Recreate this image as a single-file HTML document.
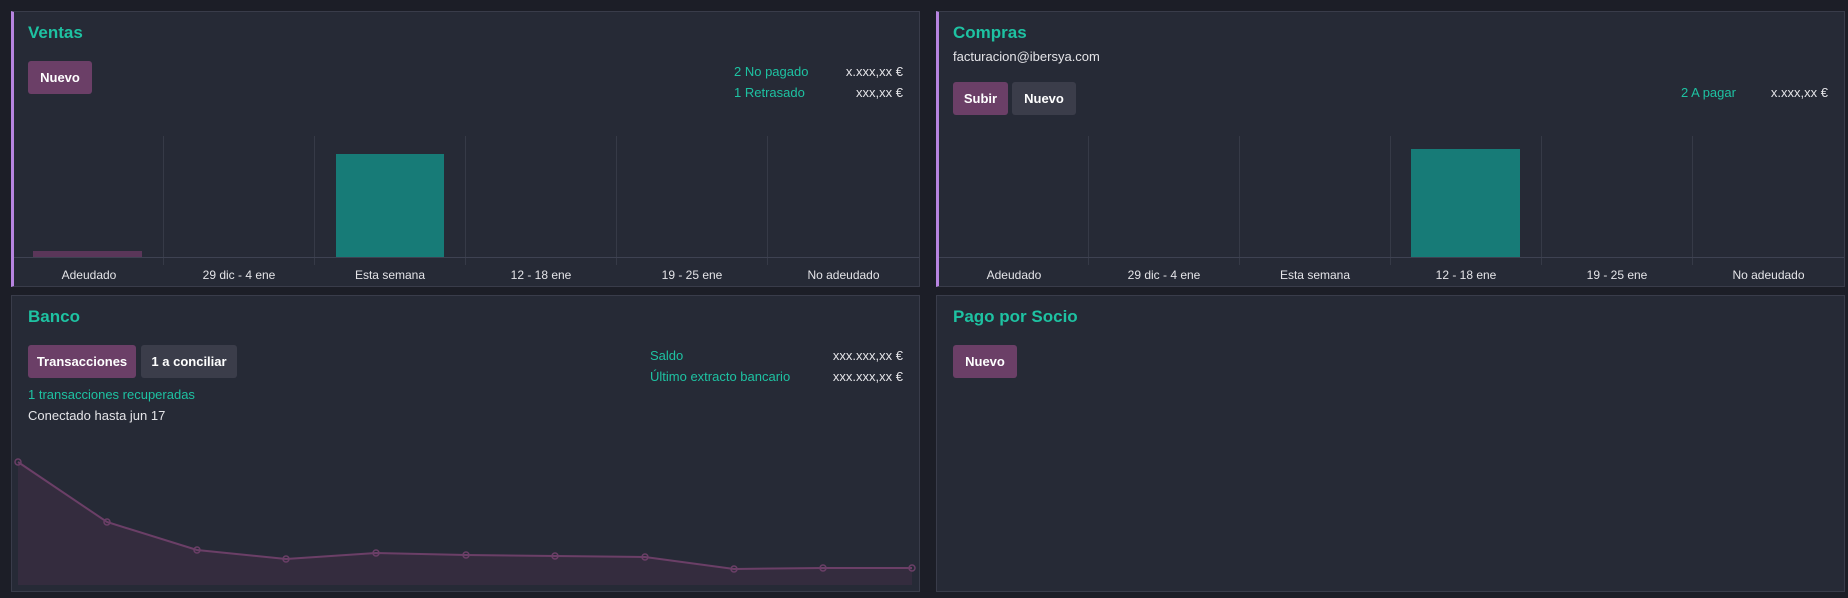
<!DOCTYPE html>
<html><head><meta charset="utf-8"><style>
*{margin:0;padding:0;box-sizing:border-box}
body{width:1848px;height:598px;background:#1c1e27;font-family:"Liberation Sans",sans-serif;position:relative;overflow:hidden;color:#e4e4e8}
.card{position:absolute;background:#262a36;border:1px solid #393c4a}
.lb{border-left:3px solid #b784e0}
.t{position:absolute;color:#1ec2a2;font-size:17px;font-weight:bold;line-height:20px}
.a{position:absolute;font-size:13px;line-height:16px;white-space:nowrap}
.g{color:#1ec2a2}
.btn{position:absolute;height:33px;border-radius:3px;font-size:13px;font-weight:bold;color:#fff;line-height:33px;text-align:center}
.p{background:#6b3f67}.s{background:#3b3d4a}
.vl{position:absolute;width:1px;background:#363a47}
.hl{position:absolute;height:1px;background:#3e4252}
.lab{position:absolute;font-size:12px;color:#e4e4e8;text-align:center;top:267px;line-height:16px}
</style></head><body>

<!-- Ventas -->
<div class="card lb" style="left:11px;top:11px;width:909px;height:276px"></div>
<div class="t" style="left:28px;top:23px">Ventas</div>
<div class="btn p" style="left:28px;top:61px;width:64px">Nuevo</div>
<div class="a g" style="left:734px;top:64px">2 No pagado</div>
<div class="a" style="right:945px;top:64px">x.xxx,xx €</div>
<div class="a g" style="left:734px;top:85px">1 Retrasado</div>
<div class="a" style="right:945px;top:85px">xxx,xx €</div>
<div class="vl" style="left:163px;top:136px;height:129px"></div>
<div class="vl" style="left:314px;top:136px;height:129px"></div>
<div class="vl" style="left:465px;top:136px;height:129px"></div>
<div class="vl" style="left:616px;top:136px;height:129px"></div>
<div class="vl" style="left:767px;top:136px;height:129px"></div>
<div class="hl" style="left:14px;top:257px;width:905px"></div>
<div style="position:absolute;left:33px;top:251px;width:109px;height:6px;background:#5a3659"></div>
<div style="position:absolute;left:336px;top:154px;width:108px;height:103px;background:#177b77"></div>
<div class="lab" style="left:14px;width:150px">Adeudado</div>
<div class="lab" style="left:164px;width:150px">29 dic - 4 ene</div>
<div class="lab" style="left:315px;width:150px">Esta semana</div>
<div class="lab" style="left:466px;width:150px">12 - 18 ene</div>
<div class="lab" style="left:617px;width:150px">19 - 25 ene</div>
<div class="lab" style="left:768px;width:151px">No adeudado</div>

<!-- Compras -->
<div class="card lb" style="left:936px;top:11px;width:909px;height:276px"></div>
<div class="t" style="left:953px;top:23px">Compras</div>
<div class="a" style="left:953px;top:49px">facturacion@ibersya.com</div>
<div class="btn p" style="left:953px;top:82px;width:55px">Subir</div>
<div class="btn s" style="left:1012px;top:82px;width:64px">Nuevo</div>
<div class="a g" style="left:1681px;top:85px">2 A pagar</div>
<div class="a" style="right:20px;top:85px">x.xxx,xx €</div>
<div class="vl" style="left:1088px;top:136px;height:129px"></div>
<div class="vl" style="left:1239px;top:136px;height:129px"></div>
<div class="vl" style="left:1390px;top:136px;height:129px"></div>
<div class="vl" style="left:1541px;top:136px;height:129px"></div>
<div class="vl" style="left:1692px;top:136px;height:129px"></div>
<div class="hl" style="left:939px;top:257px;width:905px"></div>
<div style="position:absolute;left:1411px;top:149px;width:109px;height:108px;background:#177b77"></div>
<div class="lab" style="left:939px;width:150px">Adeudado</div>
<div class="lab" style="left:1089px;width:150px">29 dic - 4 ene</div>
<div class="lab" style="left:1240px;width:150px">Esta semana</div>
<div class="lab" style="left:1391px;width:150px">12 - 18 ene</div>
<div class="lab" style="left:1542px;width:150px">19 - 25 ene</div>
<div class="lab" style="left:1693px;width:151px">No adeudado</div>

<!-- Banco -->
<div class="card" style="left:11px;top:295px;width:909px;height:297px"></div>
<div class="t" style="left:28px;top:307px">Banco</div>
<div class="btn p" style="left:28px;top:345px;width:108px">Transacciones</div>
<div class="btn s" style="left:141px;top:345px;width:96px">1 a conciliar</div>
<div class="a g" style="left:28px;top:387px">1 transacciones recuperadas</div>
<div class="a" style="left:28px;top:408px">Conectado hasta jun 17</div>
<div class="a g" style="left:650px;top:348px">Saldo</div>
<div class="a" style="right:945px;top:348px">xxx.xxx,xx €</div>
<div class="a g" style="left:650px;top:369px">Último extracto bancario</div>
<div class="a" style="right:945px;top:369px">xxx.xxx,xx €</div>
<svg style="position:absolute;left:0;top:0" width="930" height="598">
<polygon fill="#342c3e" points="18,462 107,522 197,550 286,559 376,553 466,555 555,556 645,557 734,569 823,568 912,568 912,585 18,585"/>
<polyline fill="none" stroke="#6b3f67" stroke-width="2" points="18,462 107,522 197,550 286,559 376,553 466,555 555,556 645,557 734,569 823,568 912,568"/>
<g fill="none" stroke="#6b3f67" stroke-width="1.5">
<circle cx="18" cy="462" r="3"/><circle cx="107" cy="522" r="3"/><circle cx="197" cy="550" r="3"/><circle cx="286" cy="559" r="3"/><circle cx="376" cy="553" r="3"/><circle cx="466" cy="555" r="3"/><circle cx="555" cy="556" r="3"/><circle cx="645" cy="557" r="3"/><circle cx="734" cy="569" r="3"/><circle cx="823" cy="568" r="3"/><circle cx="912" cy="568" r="3"/>
</g></svg>

<!-- Pago por Socio -->
<div class="card" style="left:936px;top:295px;width:909px;height:297px"></div>
<div class="t" style="left:953px;top:307px">Pago por Socio</div>
<div class="btn p" style="left:953px;top:345px;width:64px">Nuevo</div>
</body></html>
